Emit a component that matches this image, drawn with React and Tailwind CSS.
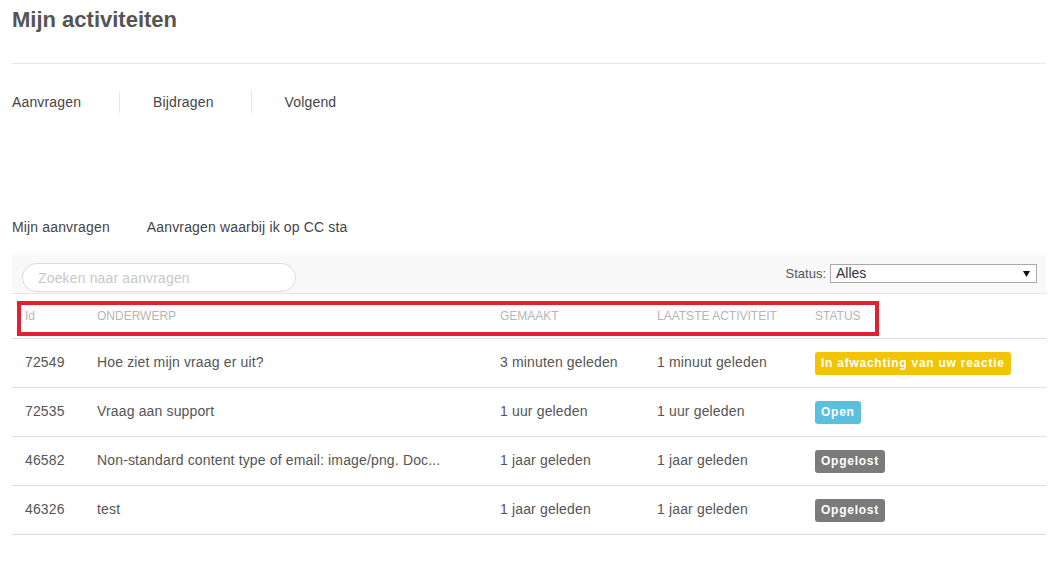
// Mijn activiteiten — overzicht van aanvragen

const rows = [
  { id: '72549', subject: 'Hoe ziet mijn vraag er uit?', created: '3 minuten geleden', last: '1 minuut geleden', status: 'wait' },
  { id: '72535', subject: 'Vraag aan support', created: '1 uur geleden', last: '1 uur geleden', status: 'open' },
  { id: '46582', subject: 'Non-standard content type of email: image/png. Doc...', created: '1 jaar geleden', last: '1 jaar geleden', status: 'solved' },
  { id: '46326', subject: 'test', created: '1 jaar geleden', last: '1 jaar geleden', status: 'solved' },
]

function Badge({ status }) {
  if (status === 'wait') {
    return (
      <span className="inline-block h-[23px] leading-[23px] px-[6px] rounded-[3px] bg-[#f2c500] text-white text-[12px] font-bold tracking-[0.75px]">
        In afwachting van uw reactie
      </span>
    )
  }
  if (status === 'open') {
    return (
      <span className="inline-block h-[23px] leading-[23px] px-[6px] rounded-[3px] bg-[#5bc0de] text-white text-[12px] font-bold tracking-[0.75px]">
        Open
      </span>
    )
  }
  return (
    <span className="inline-block h-[23px] leading-[23px] px-[6px] rounded-[3px] bg-[#7b7b7b] text-white text-[12px] font-bold tracking-[0.75px]">
      Opgelost
    </span>
  )
}

export default function App() {
  return (
    <div className="min-h-[573px] bg-white font-['Liberation_Sans',Arial,sans-serif] text-[#555]">
      <div className="ml-[12px] w-[1034px]">
        {/* Titel */}
        <div className="h-[64px] border-b border-[#e8e8e8] pt-[5px]">
          <h1 className="text-[22px] leading-[30px] font-bold text-[#555]">Mijn activiteiten</h1>
        </div>

        {/* Hoofdtabs */}
        <div className="mt-[27px] flex items-center text-[14px] tracking-[0.15px] text-[#444]">
          <span className="h-[22px] leading-[22px] pr-[38px] border-r border-[#e6e6e6]">Aanvragen</span>
          <span className="h-[22px] leading-[22px] pl-[33px] pr-[37px] border-r border-[#e6e6e6]">Bijdragen</span>
          <span className="h-[22px] leading-[22px] pl-[33px]">Volgend</span>
        </div>

        {/* Subtabs */}
        <div className="mt-[104px] flex items-center gap-[37px] text-[14px] tracking-[0.15px] leading-[20px] text-[#444]">
          <span>Mijn aanvragen</span>
          <span>Aanvragen waarbij ik op CC sta</span>
        </div>

        {/* Toolbar */}
        <div className="mt-[18px] h-[39px] bg-[#f9f9f9] border-b border-[#e6e6e6] pl-[10px] pr-[9px] pt-[8px] flex justify-between">
          <div className="w-[274px] h-[29px] rounded-full border border-[#dcdcdc] bg-white pl-[15px] text-[14px] tracking-[0.15px] leading-[28px] text-[#c8c8c8]">
            Zoeken naar aanvragen
          </div>
          <div className="flex items-start gap-[4px] pt-[1px]">
            <span className="text-[13px] leading-[19px] text-[#555]">Status:</span>
            <div className="w-[207px] h-[19px] border border-[#a9a9a9] bg-white flex items-center justify-between pl-[5px] pr-[4px]">
              <span className="text-[14px] leading-[17px] text-[#333]">Alles</span>
              <svg width="7" height="6" viewBox="0 0 7 6" className="mr-[2px]">
                <path d="M0 0h7L3.5 6z" fill="#111" />
              </svg>
            </div>
          </div>
        </div>

        {/* Tabel */}
        <div className="relative grid grid-cols-[72px_403px_157px_158px_244px] h-[45px] items-center border-b border-[#dedede] text-[12px] uppercase text-[#b5b5b5]">
          <div className="pl-[13px] normal-case">Id</div>
          <div className="pl-[13px]">Onderwerp</div>
          <div className="pl-[13px]">Gemaakt</div>
          <div className="pl-[13px]">Laatste activiteit</div>
          <div className="pl-[13px]">Status</div>
          <div className="absolute left-[5px] top-[7px] w-[862px] h-[35px] border-[4px] border-[#e3202f]" />
        </div>

        {rows.map((r) => (
          <div
            key={r.id}
            className="grid grid-cols-[72px_403px_157px_158px_244px] h-[49px] items-center border-b border-[#dedede] text-[14px] tracking-[0.15px] leading-[20px] text-[#555]"
          >
            <div className="pl-[13px] -mt-[2px]">{r.id}</div>
            <div className="pl-[13px] -mt-[2px]">{r.subject}</div>
            <div className="pl-[13px] -mt-[2px]">{r.created}</div>
            <div className="pl-[13px] -mt-[2px]">{r.last}</div>
            <div className="pl-[13px]">
              <Badge status={r.status} />
            </div>
          </div>
        ))}
      </div>
    </div>
  )
}
